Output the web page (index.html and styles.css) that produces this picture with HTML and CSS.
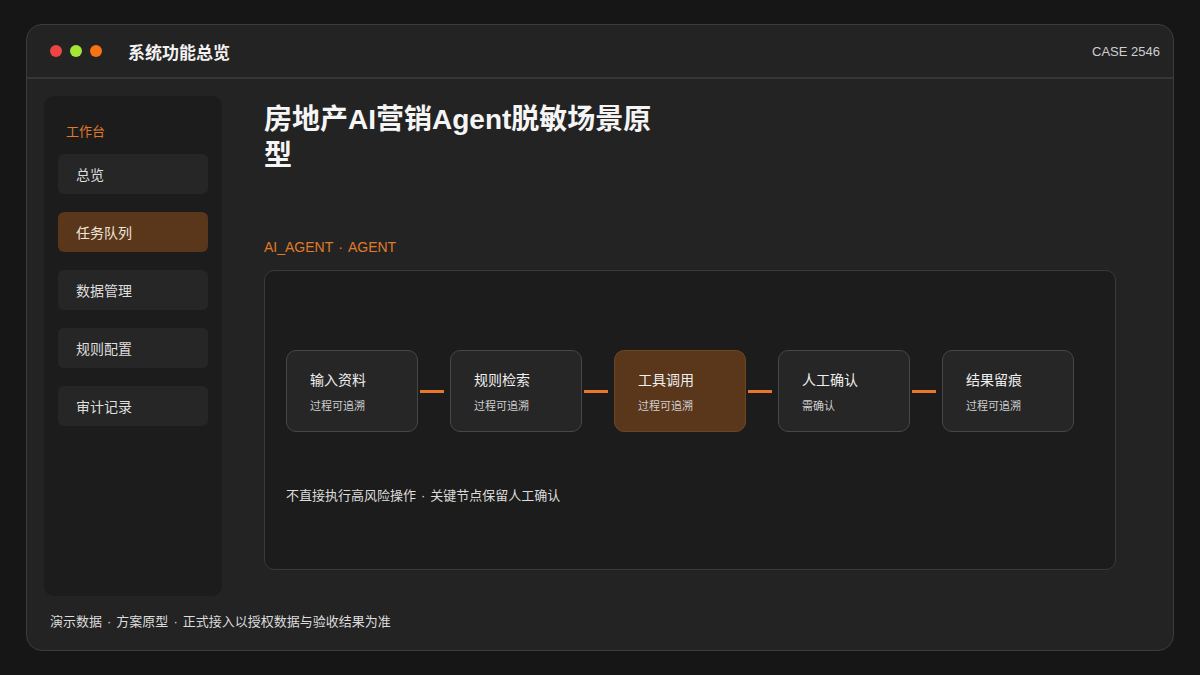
FILE: index.html
```html
<!DOCTYPE html>
<html lang="zh-CN">
<head>
<meta charset="utf-8">
<title>系统功能总览</title>
<link rel="stylesheet" href="styles.css">
</head>
<body>
<div class="window">
  <header class="titlebar">
    <div class="dots">
      <span class="dot red"></span>
      <span class="dot green"></span>
      <span class="dot orange"></span>
    </div>
    <div class="app-title">系统功能总览</div>
    <div class="case">CASE 2546</div>
  </header>
  <div class="content">
    <aside class="sidebar">
      <div class="side-label">工作台</div>
      <div class="side-item">总览</div>
      <div class="side-item active">任务队列</div>
      <div class="side-item">数据管理</div>
      <div class="side-item">规则配置</div>
      <div class="side-item">审计记录</div>
    </aside>
    <main class="main">
      <h1 class="page-title">房地产AI营销Agent脱敏场景原型</h1>
      <div class="tag">AI_AGENT<span class="sep">·</span>AGENT</div>
      <section class="panel">
        <div class="flow">
          <div class="node"><div class="node-title">输入资料</div><div class="node-sub">过程可追溯</div></div>
          <div class="link"></div>
          <div class="node"><div class="node-title">规则检索</div><div class="node-sub">过程可追溯</div></div>
          <div class="link"></div>
          <div class="node active"><div class="node-title">工具调用</div><div class="node-sub">过程可追溯</div></div>
          <div class="link"></div>
          <div class="node"><div class="node-title">人工确认</div><div class="node-sub">需确认</div></div>
          <div class="link"></div>
          <div class="node"><div class="node-title">结果留痕</div><div class="node-sub">过程可追溯</div></div>
        </div>
        <p class="note">不直接执行高风险操作<span class="sep">·</span>关键节点保留人工确认</p>
      </section>
    </main>
  </div>
  <footer class="footer">演示数据<span class="sep">·</span>方案原型<span class="sep">·</span>正式接入以授权数据与验收结果为准</footer>
</div>
</body>
</html>
```

FILE: styles.css
```css
* { box-sizing: border-box; }
html, body { margin: 0; padding: 0; }
body {
  width: 1200px;
  height: 675px;
  background: #161616;
  padding: 24px 26px;
  font-family: "Liberation Sans", "Noto Sans CJK SC", sans-serif;
  color: #e6e6e6;
  overflow: hidden;
}
.window {
  width: 1148px;
  height: 627px;
  background: #232323;
  border: 1px solid #3c3c3c;
  border-radius: 16px;
  display: flex;
  flex-direction: column;
  overflow: hidden;
}
.titlebar {
  height: 54px;
  flex: 0 0 54px;
  border-bottom: 2px solid #363636;
  display: flex;
  align-items: center;
  padding: 0 13px 0 23px;
}
.dots { display: flex; gap: 8px; }
.dot { width: 12px; height: 12px; border-radius: 50%; display: block; }
.dot.red { background: #ef4444; }
.dot.green { background: #a3e635; }
.dot.orange { background: #f97316; }
.app-title {
  margin-left: 26px;
  font-size: 17px;
  font-weight: 700;
  color: #f2f2f2;
}
.case {
  margin-left: auto;
  font-size: 13px;
  color: #cfcfcf;
}
.content {
  display: flex;
  padding: 17px 0 0 17px;
  gap: 42px;
}
.sidebar {
  width: 178px;
  height: 500px;
  background: #1c1c1c;
  border-radius: 10px;
  padding: 27px 14px 0 14px;
  display: flex;
  flex-direction: column;
  gap: 18px;
}
.side-label {
  font-size: 13px;
  color: #e07a2a;
  padding-left: 8px;
  line-height: 18px;
  margin-bottom: -5px;
}
.side-item {
  height: 40px;
  background: #262626;
  border-radius: 6px;
  padding-left: 18px;
  display: flex;
  align-items: center;
  font-size: 14px;
  color: #dedede;
}
.side-item.active { background: #5a361b; color: #f0e6dc; }
.main {
  width: 852px;
  display: flex;
  flex-direction: column;
}
.page-title {
  margin: 6px 0 0 0;
  width: 410px;
  font-size: 28px;
  line-height: 36px;
  font-weight: 700;
  color: #f5f5f5;
}
.tag {
  margin-top: 64px;
  font-size: 14px;
  line-height: 18px;
  color: #e07a2a;
}
.sep { margin: 0 5px; }
.panel {
  margin-top: 14px;
  height: 300px;
  background: #1c1c1c;
  border: 1px solid #3a3a3a;
  border-radius: 10px;
  padding: 79px 21px 0 21px;
}
.flow { display: flex; align-items: center; }
.node {
  width: 132px;
  height: 82px;
  background: #262626;
  border: 1px solid #474747;
  border-radius: 10px;
  padding: 19px 0 0 23px;
}
.node.active { background: #5a361b; border-color: #6d4626; }
.node-title { font-size: 14px; line-height: 20px; color: #efefef; }
.node-sub { margin-top: 8px; font-size: 11px; line-height: 16px; color: #cfcfcf; }
.link {
  width: 24px;
  height: 3px;
  margin: 0 6px 0 2px;
  background: #e8772a;
}
.note {
  margin: 55px 0 0 0;
  font-size: 13px;
  line-height: 18px;
  color: #dcdcdc;
}
.footer {
  padding: 17px 0 0 23px;
  font-size: 13px;
  line-height: 18px;
  color: #dcdcdc;
}
```
